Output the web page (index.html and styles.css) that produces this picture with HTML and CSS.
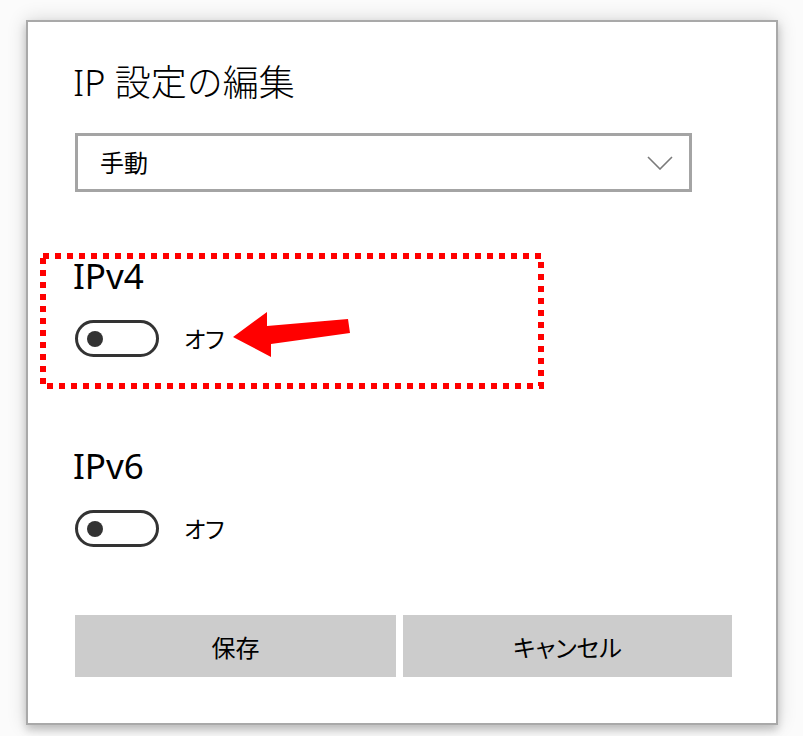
FILE: index.html
```html
<!DOCTYPE html>
<html lang="ja">
<head>
    <meta charset="UTF-8">
    <meta name="viewport" content="width=device-width, initial-scale=1.0">
    <title>IP 設定の編集</title>
    <link rel="stylesheet" href="styles.css">
</head>
<body>

    <div class="dialog">
        <h1 class="title">IP 設定の編集</h1>

        <!-- Mode dropdown -->
        <div class="select">
            <span class="select-value">手動</span>
            <svg class="chevron" width="26" height="14" viewBox="0 0 26 14">
                <polyline points="1,1 13,13 25,1" fill="none" stroke="#7a7a7a" stroke-width="1.6"/>
            </svg>
        </div>

        <!-- IPv4 with the red annotation on top -->
        <section class="group">
            <div class="group-label">IPv4</div>
            <div class="toggle-row">
                <span class="toggle"><span class="knob"></span></span>
                <span class="state">オフ</span>
            </div>
            <svg class="mark" width="504" height="136" viewBox="0 0 504 136">
                <rect x="3" y="3" width="498" height="130" fill="none" stroke="#ff0000" stroke-width="6" stroke-dasharray="6 6"/>
                <polygon points="193,84 227,59 227,73 308,66 310,80 231,91 231,104" fill="#ff0000"/>
            </svg>
        </section>

        <!-- IPv6 -->
        <section class="group">
            <div class="group-label">IPv6</div>
            <div class="toggle-row">
                <span class="toggle"><span class="knob"></span></span>
                <span class="state">オフ</span>
            </div>
        </section>

        <div class="actions">
            <button class="btn">保存</button>
            <button class="btn">キャンセル</button>
        </div>
    </div>

</body>
</html>
```

FILE: styles.css
```css
/* Page behind the dialog */
html, body {
    margin: 0;
    height: 100%;
}

body {
    background-color: #fbfbfb;
    font-family: "Noto Sans", "Noto Sans CJK JP", sans-serif;
    color: #000;
    overflow: hidden;
}

/* Dialog card */
.dialog {
    box-sizing: border-box;
    width: 752px;
    height: 705px;
    margin: 20px 0 0 26px;
    padding: 40px 44px 0 47px;
    background-color: #fff;
    border: 2px solid #a9a9a9;
    box-shadow: 0 0 18px rgba(0, 0, 0, 0.16), 0 5px 8px rgba(0, 0, 0, 0.18);
}

.title {
    margin: 0 0 0 -2px;
    font-size: 36px;
    font-weight: 300;
    line-height: 42px;
}

/* Dropdown */
.select {
    box-sizing: border-box;
    width: 617px;
    height: 59px;
    margin-top: 29px;
    padding: 0 16px 0 22px;
    border: 3px solid #a4a4a4;
    display: flex;
    align-items: center;
    justify-content: space-between;
}

.select-value {
    font-size: 24px;
    line-height: 30px;
}

/* Toggle groups */
.group {
    position: relative;
    margin-top: 63px;
}

.group + .group {
    margin-top: 88px;
}

.group-label {
    font-size: 35px;
    line-height: 42px;
    margin-left: -2px;
}

.toggle-row {
    display: flex;
    align-items: center;
    gap: 25px;
    margin-top: 23px;
}

.toggle {
    box-sizing: border-box;
    width: 84px;
    height: 37px;
    border: 3px solid #333;
    border-radius: 19px;
    display: flex;
    align-items: center;
    padding-left: 9px;
}

.knob {
    width: 16px;
    height: 16px;
    border-radius: 50%;
    background-color: #333;
}

.state {
    font-size: 23px;
    line-height: 30px;
    font-feature-settings: "palt";
}

/* Red annotation over IPv4 */
.mark {
    position: absolute;
    left: -35px;
    top: -2px;
    pointer-events: none;
}

/* Buttons */
.actions {
    display: grid;
    grid-template-columns: 321px 329px;
    gap: 7px;
    margin-top: 68px;
}

.btn {
    height: 62px;
    border: none;
    background-color: #cccccc;
    font-family: "Noto Sans CJK JP", sans-serif;
    font-size: 24px;
    color: #000;
    font-feature-settings: "palt";
    padding: 0;
}
```
